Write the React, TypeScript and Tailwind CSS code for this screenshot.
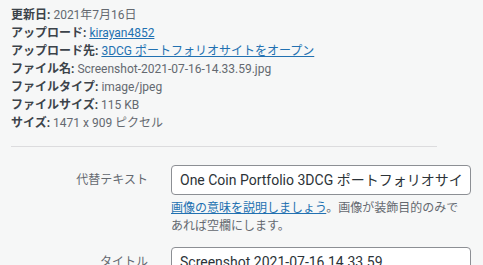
import React from "react";

const details: { label: string; value: React.ReactNode }[] = [
  { label: "更新日", value: "2021年7月16日" },
  {
    label: "アップロード",
    value: (
      <a href="#" className="text-[#2271b1] underline">
        kirayan4852
      </a>
    ),
  },
  {
    label: "アップロード先",
    value: (
      <a href="#" className="text-[#2271b1] underline">
        3DCG ポートフォリオサイトをオープン
      </a>
    ),
  },
  { label: "ファイル名", value: "Screenshot-2021-07-16-14.33.59.jpg" },
  { label: "ファイルタイプ", value: "image/jpeg" },
  { label: "ファイルサイズ", value: "115 KB" },
  { label: "サイズ", value: "1471 x 909 ピクセル" },
];

function Field({ value }: { value: string }) {
  return (
    <div className="h-[30px] rounded-[4px] border border-[#8c8f94] bg-white px-2 text-[14px] leading-[28px] text-[#2c3338]">
      <div className="whitespace-nowrap overflow-hidden">{value}</div>
    </div>
  );
}

function App() {
  return (
    <div className="w-[483px] h-[265px] overflow-hidden bg-[#f6f7f7] font-['Roboto','Noto_Sans_CJK_JP',sans-serif] text-[12px] leading-[18px] text-[#646970]">
      <div className="pl-[11px] pt-[6px]">
        {details.map((d) => (
          <div key={d.label} className="whitespace-nowrap">
            <strong className="font-bold text-[#3c434a]">{d.label}:</strong>{" "}
            {d.value}
          </div>
        ))}
      </div>
      <div className="ml-[11px] w-[426px] h-px bg-[#dcdcde] mt-[14px]" />
      <div className="mt-[18px] flex items-start">
        <span className="w-[148px] text-right leading-[30px] shrink-0">代替テキスト</span>
        <div className="ml-[23px] w-[300px]">
          <Field value="One Coin Portfolio 3DCG ポートフォリオサイト" />
          <p className="mt-[4px] w-[292px]">
            <a href="#" className="text-[#2271b1] underline">
              画像の意味を説明しましょう
            </a>
            。画像が装飾目的のみであれば空欄にします。
          </p>
        </div>
      </div>
      <div className="mt-[12px] flex items-start">
        <span className="w-[148px] text-right leading-[30px] shrink-0">タイトル</span>
        <div className="ml-[23px] w-[300px]">
          <Field value="Screenshot 2021-07-16 14.33.59" />
        </div>
      </div>
    </div>
  );
}

export default App;
